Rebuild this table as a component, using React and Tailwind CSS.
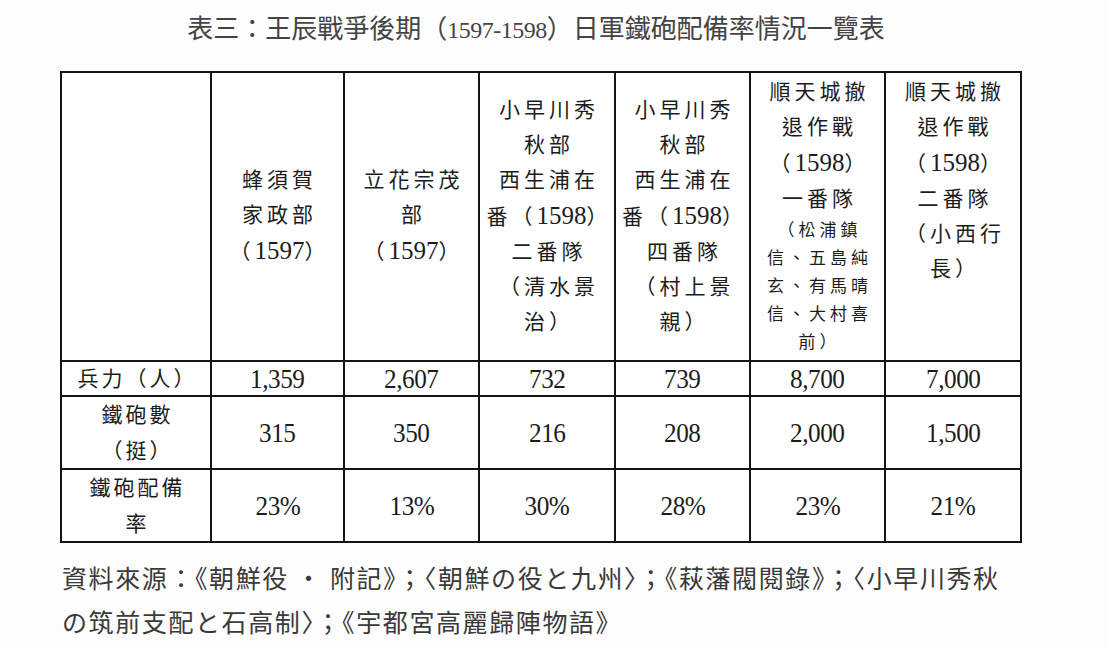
import React from "react";

const SERIF = "font-['Liberation_Serif','Noto_Sans_CJK_TC',serif]";

function Line({ text, digitClass = "text-[25px]" }) {
  const parts = text.split(/(\d[\d,]*)/);
  return (
    <div className="whitespace-nowrap">
      {parts.map((p, i) =>
        /^\d/.test(p) ? (
          <span key={i} className={`tracking-normal ${digitClass}`}>
            {p}
          </span>
        ) : (
          <span key={i}>{p}</span>
        )
      )}
    </div>
  );
}

function HeadCell({ lines, small = [], top = false }) {
  return (
    <div
      className={`bg-white flex flex-col items-center ${
        top ? "justify-start pt-[2px]" : "justify-center"
      } pl-[4px] text-[21px] leading-[35px] tracking-[4px] text-[#1c1c1c]`}
    >
      {lines.map((l, i) => (
        <Line key={i} text={l} />
      ))}
      {small.map((l, i) => (
        <div key={"s" + i} className="text-[17px] leading-[28px] whitespace-nowrap">
          {l}
        </div>
      ))}
    </div>
  );
}

function LabelCell({ lines }) {
  return (
    <div className="bg-white flex flex-col items-center justify-center pl-[3px] text-[21px] leading-[36px] tracking-[3px] text-[#1c1c1c]">
      {lines.map((l, i) => (
        <div key={i} className="whitespace-nowrap">
          {l}
        </div>
      ))}
    </div>
  );
}

function NumCell({ v }) {
  return (
    <div className="bg-white flex items-center justify-center text-[#1c1c1c]">
      <span className="inline-block text-[28px] leading-none scale-x-90 tracking-[-0.5px]">{v}</span>
    </div>
  );
}

export default function App() {
  const soldiers = ["1,359", "2,607", "732", "739", "8,700", "7,000"];
  const guns = ["315", "350", "216", "208", "2,000", "1,500"];
  const rates = ["23%", "13%", "30%", "28%", "23%", "21%"];
  return (
    <div className={`w-[1108px] h-[648px] bg-[#fdfdfd] overflow-hidden ${SERIF}`}>
      <div className="ml-[60px] w-[962px]">
        <div className="h-[71px] flex items-start justify-center pt-[12px] pr-[10px]">
          <div className="text-[26px] leading-[36px] text-[#444] whitespace-nowrap">
            表三：王辰戰爭後期（<span className="text-[24px] tracking-[-0.5px]">1597-1598</span>）日軍鐵砲配備率情況一覽表
          </div>
        </div>
        <div className="grid grid-cols-[148px_131px_133px_134px_133px_133px_134px] grid-rows-[287px_33px_71px_71px] gap-[2px] p-[2px] bg-[#141414]">
          <div className="bg-white" />
          <HeadCell lines={["蜂須賀", "家政部", "（1597）"]} />
          <HeadCell lines={["立花宗茂", "部", "（1597）"]} />
          <HeadCell lines={["小早川秀", "秋部", "西生浦在", "番（1598）", "二番隊", "（清水景", "治）"]} />
          <HeadCell lines={["小早川秀", "秋部", "西生浦在", "番（1598）", "四番隊", "（村上景", "親）"]} />
          <HeadCell
            top
            lines={["順天城撤", "退作戰", "（1598）", "一番隊"]}
            small={["（松浦鎮", "信、五島純", "玄、有馬晴", "信、大村喜", "前）"]}
          />
          <HeadCell top lines={["順天城撤", "退作戰", "（1598）", "二番隊", "（小西行", "長）"]} />

          <LabelCell lines={["兵力（人）"]} />
          {soldiers.map((v, i) => (
            <NumCell key={"a" + i} v={v} />
          ))}

          <LabelCell lines={["鐵砲數", "（挺）"]} />
          {guns.map((v, i) => (
            <NumCell key={"b" + i} v={v} />
          ))}

          <LabelCell lines={["鐵砲配備", "率"]} />
          {rates.map((v, i) => (
            <NumCell key={"c" + i} v={v} />
          ))}
        </div>
      </div>
      <div className="ml-[62px] mt-[12px] font-['Noto_Sans_CJK_TC',sans-serif] text-[25px] leading-[44px] tracking-[1.6px] text-[#3a3a3a] whitespace-nowrap">
        <div>資料來源：《朝鮮役 • 附記》；〈朝鮮の役と九州〉；《萩藩閥閱錄》；〈小早川秀秋</div>
        <div>の筑前支配と石高制〉；《宇都宮高麗歸陣物語》</div>
      </div>
    </div>
  );
}
